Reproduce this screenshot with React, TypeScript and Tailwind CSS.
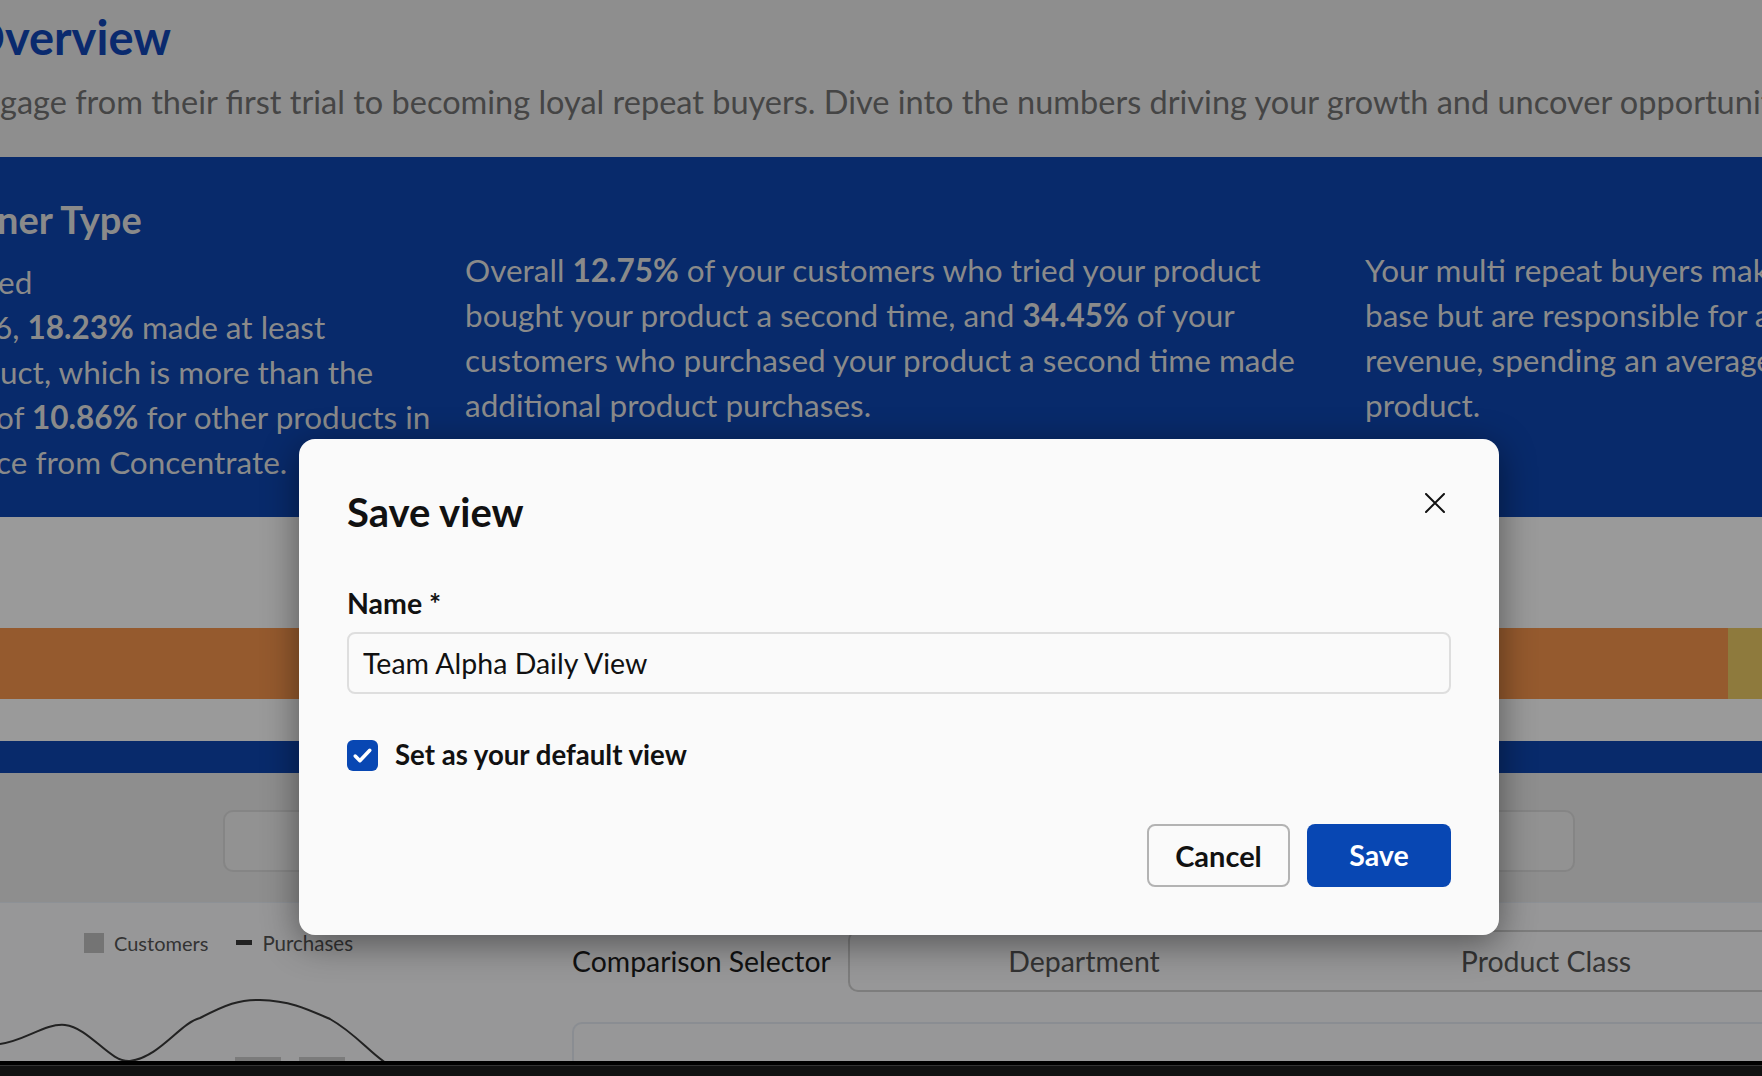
import { useState } from "react";

function CloseIcon() {
  return (
    <svg width="20" height="20" viewBox="0 0 20 20" fill="none">
      <path d="M1 1L19 19M19 1L1 19" stroke="#111" strokeWidth="2" strokeLinecap="round" />
    </svg>
  );
}

function CheckIcon() {
  return (
    <svg width="25" height="25" viewBox="0 0 24 24" fill="none">
      <path d="M5 12.5l4.5 4.5L19 7" stroke="#fff" strokeWidth="3.4" strokeLinecap="round" strokeLinejoin="round" />
    </svg>
  );
}

function SaveViewModal() {
  const [name, setName] = useState("Team Alpha Daily View");
  const [isDefault, setIsDefault] = useState(true);

  return (
    <div className="absolute left-[299px] top-[439px] w-[1200px] rounded-[16px] bg-[#fafafa] p-[48px] shadow-[0_8px_36px_rgba(0,0,0,0.45)]">
      <div className="flex items-start justify-between">
        <h2 className="text-[40px] font-bold leading-[50px] text-[#111]">Save view</h2>
        <button className="mr-[6px] mt-[6px]">
          <CloseIcon />
        </button>
      </div>

      <label className="mt-[50px] block text-[28.5px] font-bold leading-[32px] text-[#111]">Name *</label>
      <input
        value={name}
        onChange={(e) => setName(e.target.value)}
        className="mt-[13px] block h-[62px] w-full rounded-[8px] border-2 border-[#dedede] bg-[#fafafa] px-[14px] text-[28.5px] text-[#111] outline-none"
      />

      <div className="mt-[45px] flex h-[32px] items-center gap-[17px]">
        <button
          onClick={() => setIsDefault(!isDefault)}
          className="flex h-[31px] w-[31px] items-center justify-center rounded-[6px] bg-[#0847b3]"
        >
          {isDefault && <CheckIcon />}
        </button>
        <span className="text-[27.6px] font-bold text-[#111]">Set as your default view</span>
      </div>

      <div className="mt-[53px] flex justify-end gap-[17px]">
        <button className="h-[63px] w-[143px] rounded-[8px] border-2 border-[#b3b3b3] text-[29px] font-bold text-[#111]">
          Cancel
        </button>
        <button className="h-[63px] w-[144px] rounded-[8px] bg-[#0847b3] text-[28.5px] font-bold text-white">
          Save
        </button>
      </div>
    </div>
  );
}

export default function App() {
  return (
    <div className="relative h-[1076px] w-[1762px] overflow-hidden bg-[#979798] font-['Lato',sans-serif]">
      {/* page header */}
      <div className="h-[157px] bg-[#8e8e8e] pt-[9px]">
        <h1 className="-ml-[33px] whitespace-nowrap text-[47px] font-bold leading-[56px] text-[#0a2a6e]">Overview</h1>
        <p className="mt-[17px] whitespace-nowrap text-[32.5px] leading-[40px] text-[#454545]">
          gage from their first trial to becoming loyal repeat buyers. Dive into the numbers driving your growth and uncover opportunities
        </p>
      </div>

      {/* insight band */}
      <div className="flex h-[360px] bg-[#082a6b] text-[31.5px] leading-[45px] text-[#8a8a8a]">
        <div className="w-[465px] shrink-0 pt-[38px]">
          <h3 className="-ml-[3px] whitespace-nowrap text-[38px] font-bold leading-[48px]">ner Type</h3>
          <div className="mt-[17px] whitespace-nowrap">
            <div className="-ml-[2px]">ed</div>
            <div className="-ml-[6px]">
              6, <b>18.23%</b> made at least
            </div>
            <div>uct, which is more than the</div>
            <div className="-ml-[4px]">
              of <b>10.86%</b> for other products in
            </div>
            <div className="-ml-[4px]">ce from Concentrate.</div>
          </div>
        </div>
        <div className="w-[900px] shrink-0 whitespace-nowrap pt-[91px]">
          <div>
            Overall <b>12.75%</b> of your customers who tried your product
          </div>
          <div>
            bought your product a second time, and <b>34.45%</b> of your
          </div>
          <div>customers who purchased your product a second time made</div>
          <div>additional product purchases.</div>
        </div>
        <div className="w-[860px] shrink-0 whitespace-nowrap pt-[91px]">
          <div>Your multi repeat buyers make up a small share of your customer</div>
          <div>base but are responsible for a large share of your</div>
          <div>revenue, spending an average of more on your</div>
          <div>product.</div>
        </div>
      </div>

      {/* distribution bars */}
      <div className="h-[111px] bg-[#9a9a9a]" />
      <div className="flex h-[71px]">
        <div className="flex-1 bg-[#955a2e]" />
        <div className="w-[34px] bg-[#8e7a3d]" />
      </div>
      <div className="h-[42px] bg-[#9a9a9a]" />
      <div className="h-[32px] bg-[#082a6b]" />

      {/* filter strip */}
      <div className="h-[129px] bg-[#8e8e8e] pl-[223px] pt-[37px]">
        <div className="h-[62px] w-[1352px] rounded-[10px] border-2 border-[#858585] bg-[#929292]" />
      </div>
      <div className="h-px bg-[#8d9196]" />

      {/* chart + comparison */}
      <div className="flex h-[158px] overflow-hidden">
        <div className="w-[572px] shrink-0">
          <div className="flex h-[50px] items-end gap-[10px] pl-[84px] text-[20px] leading-[20px] text-[#333]">
            <span className="h-[20px] w-[20px] bg-[#747474]" />
            <span>Customers</span>
            <span className="mb-[8px] ml-[18px] h-[5px] w-[16px] bg-[#222]" />
            <span className="text-[20.5px]">Purchases</span>
          </div>
          <svg width="572" height="108" viewBox="0 0 572 108" className="block">
            <rect x="235" y="104" width="46" height="4" fill="#7b7b7b" />
            <rect x="299" y="104" width="46" height="4" fill="#7b7b7b" />
            <path
              d="M0 91 C 25 88, 45 70, 65 72 C 90 75, 110 110, 130 108 C 160 104, 180 70, 200 65 C 225 52, 240 46, 260 47 C 290 48, 305 55, 330 66 C 355 80, 370 100, 386 110"
              stroke="#222"
              strokeWidth="2"
              fill="none"
            />
          </svg>
        </div>
        <div className="flex-1 pt-[27px]">
          <div className="flex h-[62px] items-center">
            <span className="w-[276px] shrink-0 whitespace-nowrap text-[28.4px] text-[#111]">Comparison Selector</span>
            <div className="flex h-[62px] w-[1000px] shrink-0 items-center rounded-l-[10px] border-2 border-r-0 border-[#7d7d7d] text-[28.5px] text-[#333]">
              <span className="w-[468px] text-center">Department</span>
              <span className="w-[456px] text-center">Product Class</span>
            </div>
          </div>
          <div className="mt-[30px] h-[60px] rounded-tl-[10px] border-l-2 border-t-2 border-[#8a8d92]" />
        </div>
      </div>

      {/* bottom scroll strip */}
      <div className="h-[4px] bg-black" />
      <div className="h-px bg-[#333]" />
      <div className="h-[10px] bg-[#121212]" />

      <SaveViewModal />
    </div>
  );
}
